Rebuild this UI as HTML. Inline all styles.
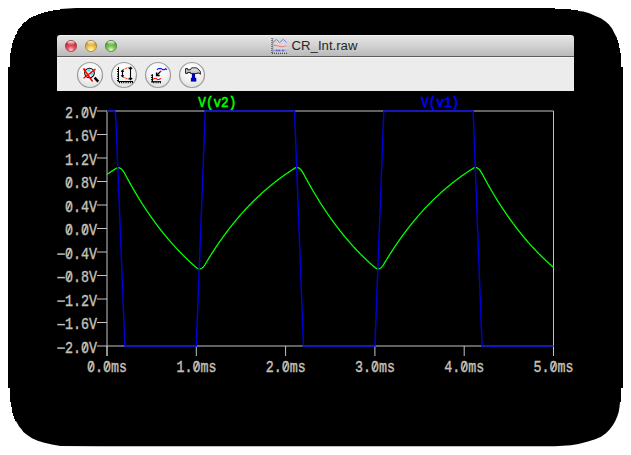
<!DOCTYPE html>
<html><head><meta charset="utf-8">
<style>
html,body{margin:0;padding:0;background:#fff;}
body{width:631px;height:455px;position:relative;overflow:hidden;}
svg{position:absolute;left:0;top:0;}
</style></head><body>
<svg width="631" height="455" viewBox="0 0 631 455">
<defs>
<radialGradient id="bg" cx="50%" cy="30%" r="75%">
<stop offset="0" stop-color="#ffffff"/><stop offset="0.5" stop-color="#f6f6f6"/><stop offset="1" stop-color="#dcdcdc"/>
</radialGradient>
<linearGradient id="tb" x1="0" y1="0" x2="0" y2="1">
<stop offset="0" stop-color="#e6e6e6"/><stop offset="0.5" stop-color="#d2d2d2"/><stop offset="1" stop-color="#b9b9b9"/>
</linearGradient>
<radialGradient id="rl" cx="50%" cy="85%" r="70%"><stop offset="0" stop-color="#fcd0d4"/><stop offset="0.45" stop-color="#ec5262"/><stop offset="1" stop-color="#b82434"/></radialGradient>
<radialGradient id="yl" cx="50%" cy="85%" r="70%"><stop offset="0" stop-color="#fff8c0"/><stop offset="0.45" stop-color="#f4cc58"/><stop offset="1" stop-color="#c8962a"/></radialGradient>
<radialGradient id="gl" cx="50%" cy="85%" r="70%"><stop offset="0" stop-color="#e0f8c8"/><stop offset="0.45" stop-color="#84cc5a"/><stop offset="1" stop-color="#4a9a30"/></radialGradient>
<linearGradient id="hl" x1="0" y1="0" x2="0" y2="1"><stop offset="0" stop-color="#fff" stop-opacity="0.95"/><stop offset="1" stop-color="#fff" stop-opacity="0.1"/></linearGradient>
<linearGradient id="hh" x1="0" y1="0" x2="0" y2="1"><stop offset="0" stop-color="#fafafa"/><stop offset="0.5" stop-color="#c8c8c8"/><stop offset="1" stop-color="#f4f4f4"/></linearGradient>
</defs>
<polygon points="76,8 555,8 555,9 571,9 571,10 578,10 578,11 583.2,11.6 589.3,13.3 595.5,16 600.8,18.2 605.2,21.3 608.7,24.3 612.2,28.7 614.8,34 617,38 617,40 618,40 618,43 619,43 619,48 620,48 620,53 621,53 621,67 623,67 623,388 621,388 621,402 620,402 619.5,407.1 618.7,411.9 617.2,416.6 615.4,420.8 613,425 609.4,429.7 605.9,433.3 601.1,436.8 595.2,439.2 588,441.6 578.5,444 570.8,445.2 555,446.3 100,446.2 60.5,445.9 51.9,444.5 43.4,442.6 37.7,440.7 32,438.3 27.2,435 23.4,432.1 21.5,429.3 19.1,426.4 17.7,424 16.3,421.5 15,421 15,419 14,419 14,416 13,416 13,413 12,413 12,407 11,407 11,402 10,402 10,388 8,388 8,67 10,67 10,53 11,53 11,48 12,48 12,43 13,43 13,42 13,41 13,40 14,40 14,39 14,38 15,38 15,37 15,36 15,35 16,35 16,34 17,34 17,33 17,32 17,31 18,31 18,30 18,29 19,29 19,28 20,28 20,27 21,27 21,26 22,26 22,25 22,24 23,24 23,23 24,23 24,22 26,22 26,21 27,21 27,20 28,20 28,19 29,19 29,18 31,18 31,17 33,17 33,16 36,16 36,15 38,15 38,14 41,14 41,13 44,13 44,12 48,12 48,11 53,11 53,10 60,10 60,9" fill="#000"/>
<path d="M57,56 V38 q0,-3 3,-3 H571 q3,0 3,3 V56 z" fill="url(#tb)"/>
<line x1="60" y1="35.5" x2="571" y2="35.5" stroke="#f2f2f2" stroke-width="1"/>
<rect x="57" y="56" width="517" height="35" fill="#ececec"/>
<rect x="57" y="56" width="517" height="1" fill="#5c5c5c"/>
<rect x="57" y="57" width="517" height="1" fill="#f6f6f6"/>
<circle cx="71" cy="46" r="5.6" fill="url(#rl)" stroke="#9a3a44" stroke-width="0.7"/>
<circle cx="91" cy="46" r="5.6" fill="url(#yl)" stroke="#9a7a30" stroke-width="0.7"/>
<circle cx="111" cy="46" r="5.6" fill="url(#gl)" stroke="#4a7a3a" stroke-width="0.7"/>
<ellipse cx="71" cy="42.9" rx="3.6" ry="1.9" fill="url(#hl)"/>
<ellipse cx="91" cy="42.9" rx="3.6" ry="1.9" fill="url(#hl)"/>
<ellipse cx="111" cy="42.9" rx="3.6" ry="1.9" fill="url(#hl)"/>
<circle cx="90" cy="75" r="12.5" fill="url(#bg)" stroke="#9c9c9c" stroke-width="1.2"/><circle cx="124" cy="75" r="12.5" fill="url(#bg)" stroke="#9c9c9c" stroke-width="1.2"/><circle cx="158" cy="75" r="12.5" fill="url(#bg)" stroke="#9c9c9c" stroke-width="1.2"/><circle cx="192" cy="75" r="12.5" fill="url(#bg)" stroke="#9c9c9c" stroke-width="1.2"/>
<text x="291.6" y="50.1" font-family="'Liberation Sans', sans-serif" font-size="13.3" fill="#262626" textLength="65.8" lengthAdjust="spacingAndGlyphs">CR_Int.raw</text>

<!-- icon1 magnifier -->
<g>
<line x1="94.6" y1="77.6" x2="98.2" y2="81.6" stroke="#000" stroke-width="2.4"/>
<circle cx="89.5" cy="73" r="4.8" fill="#f2f2f2" stroke="#000" stroke-width="1.1"/>
<path d="M87.5,70.5 h3 M90.8,75 l2,-1.8" stroke="#30e0ee" stroke-width="1.8"/>
<line x1="83.6" y1="68.8" x2="92.6" y2="81.5" stroke="#f00" stroke-width="1.5"/>
<line x1="95.5" y1="69.1" x2="83.5" y2="78.3" stroke="#f00" stroke-width="1.4"/>
<circle cx="84.2" cy="69.2" r="1" fill="#f00"/>
</g>
<!-- icon2 -->
<g fill="none" stroke="#000">
<line x1="118.5" y1="67" x2="118.5" y2="81.5" stroke-width="1"/>
<line x1="118" y1="81.5" x2="133" y2="81.5" stroke-width="1"/>
<path d="M117,69.5h1M117,71.5h1M117,74h1M117,76.2h1M117,78.5h1M117,80.6h1" stroke-width="1.1"/>
<path d="M119.5,82v1.2M121.6,82v1.2M123.8,82v1.2M126,82v1.2M128.2,82v1.2M130.4,82v1.2M132.5,82v1.2" stroke-width="1.1"/>
<path d="M122.5,70.3 v6.4 M121.2,71.6 l1.3,-1.3 l1.3,1.3 M121.2,75.4 l1.3,1.3 l1.3,-1.3" stroke-width="1.1"/>
<path d="M130.5,67.2 v12.6 M128.8,69 l1.7,-1.8 l1.7,1.8 M128.8,78 l1.7,1.8 l1.7,-1.8" stroke-width="1.1"/>
<path d="M123,69.7 L128.7,67.3 M123,77 L128.7,79.4" stroke="#ff3010" stroke-width="1" stroke-dasharray="1.8,0.7"/>
</g>
<!-- icon3 -->
<g fill="none">
<path d="M156.9,69.8 L158.3,68.6 H161.3 L162.6,69.6 H164.6 L165.7,68.6 L166.9,69.8" stroke="#1818ff" stroke-width="1.1"/>
<path d="M160.6,71.4 L157,75" stroke="#000" stroke-width="1.3"/>
<path d="M156.6,72.4 V75.5 H159.7" stroke="#000" stroke-width="1.5"/>
<circle cx="160.8" cy="71.2" r="0.8" fill="#e00"/>
<line x1="152.4" y1="74.2" x2="152.4" y2="82.2" stroke="#000" stroke-width="1.1"/>
<line x1="152" y1="81.7" x2="161" y2="81.7" stroke="#000" stroke-width="1.1"/>
<path d="M151,75.3h1.4M151,77.5h1.4M151,79.7h1.4M151,81.9h1.4" stroke="#000" stroke-width="1"/>
<path d="M153.8,81.7v1.6M156,81.7v1.6M158.2,81.7v1.6M160.4,81.7v1.6" stroke="#000" stroke-width="1"/>
<path d="M153.1,79.4 L154.1,78.5 H156.3 L157.2,79.5 H159.3 L160.3,78.5 L161,78.6" stroke="#ff1010" stroke-width="1.1"/>
</g>
<!-- icon4 hammer -->
<g>
<rect x="191.9" y="73.6" width="3.2" height="4.4" fill="#0000b8"/>
<rect x="190.9" y="77.8" width="5.4" height="3.8" fill="#0000b8"/>
<path d="M185.6,68.6 H187.6 V69.8 H190.4 L191.6,67.9 H196.2 L198,69 L200.3,71.5 V74.4 L199.4,73.2 L197.6,72.8 V73.4 H190.4 V72.4 H187.6 V73.4 H185.6 Z" fill="url(#hh)" stroke="#000" stroke-width="0.9" stroke-linejoin="round"/>
</g>
<!-- title icon -->
<g>
<rect x="272" y="38" width="15" height="15" fill="#d8d8d8" opacity="0.8"/>
<line x1="272" y1="38" x2="272" y2="53.5" stroke="#222" stroke-width="1" stroke-dasharray="1,1"/>
<line x1="272.8" y1="38" x2="272.8" y2="53" stroke="#777" stroke-width="0.6"/>
<line x1="272" y1="53.2" x2="287" y2="53.2" stroke="#222" stroke-width="1" stroke-dasharray="1,1"/>
<polyline points="273,42.4 276.4,39.4 279.6,42.5 283.3,39.3 286.5,42.6" fill="none" stroke="#7c7cf0" stroke-width="1"/>
<path d="M273,46 q2,-1.5 4,-0.3 q3,1.2 6,1 q2,-0.2 3.5,-1.2" fill="none" stroke="#f07a7a" stroke-width="1"/>
<line x1="273" y1="50.5" x2="286.5" y2="50.5" stroke="#a0a0e0" stroke-width="2"/>
<path d="M276,50.5h1.5M278.5,50.5h1.5M282,50.5h1.5" stroke="#5a5ad8" stroke-width="1.4"/>
</g>

<rect x="57" y="91" width="517" height="320" fill="#000"/>
<g stroke="#c4c4c4" stroke-width="1" fill="none">
<line x1="107" y1="111" x2="553.5" y2="111"/>
<line x1="107" y1="111" x2="107" y2="356"/>
<line x1="553.5" y1="111" x2="553.5" y2="356"/>
<line x1="107" y1="346" x2="553.5" y2="346"/>
<line x1="97" y1="111.00" x2="107" y2="111.00"/><line x1="97" y1="134.50" x2="107" y2="134.50"/><line x1="97" y1="158.00" x2="107" y2="158.00"/><line x1="97" y1="181.50" x2="107" y2="181.50"/><line x1="97" y1="205.00" x2="107" y2="205.00"/><line x1="97" y1="228.50" x2="107" y2="228.50"/><line x1="97" y1="252.00" x2="107" y2="252.00"/><line x1="97" y1="275.50" x2="107" y2="275.50"/><line x1="97" y1="299.00" x2="107" y2="299.00"/><line x1="97" y1="322.50" x2="107" y2="322.50"/><line x1="97" y1="346.00" x2="107" y2="346.00"/><line x1="107.00" y1="346" x2="107.00" y2="356"/><line x1="196.30" y1="346" x2="196.30" y2="356"/><line x1="285.60" y1="346" x2="285.60" y2="356"/><line x1="374.90" y1="346" x2="374.90" y2="356"/><line x1="464.20" y1="346" x2="464.20" y2="356"/><line x1="553.50" y1="346" x2="553.50" y2="356"/>
</g>
<g font-family="'Liberation Mono', monospace" font-size="16" fill="#c4c0b8" stroke="#c4c0b8" stroke-width="0.4">
<text x="65" y="117.50" textLength="32" lengthAdjust="spacingAndGlyphs">2.0V</text><text x="65" y="141.00" textLength="32" lengthAdjust="spacingAndGlyphs">1.6V</text><text x="65" y="164.50" textLength="32" lengthAdjust="spacingAndGlyphs">1.2V</text><text x="65" y="188.00" textLength="32" lengthAdjust="spacingAndGlyphs">0.8V</text><text x="65" y="211.50" textLength="32" lengthAdjust="spacingAndGlyphs">0.4V</text><text x="65" y="235.00" textLength="32" lengthAdjust="spacingAndGlyphs">0.0V</text><text x="65" y="258.50" textLength="32" lengthAdjust="spacingAndGlyphs">0.4V</text><text x="65" y="282.00" textLength="32" lengthAdjust="spacingAndGlyphs">0.8V</text><text x="65" y="305.50" textLength="32" lengthAdjust="spacingAndGlyphs">1.2V</text><text x="65" y="329.00" textLength="32" lengthAdjust="spacingAndGlyphs">1.6V</text><text x="65" y="352.50" textLength="32" lengthAdjust="spacingAndGlyphs">2.0V</text><text x="87.10" y="371.8" textLength="40" lengthAdjust="spacingAndGlyphs">0.0ms</text><text x="176.40" y="371.8" textLength="40" lengthAdjust="spacingAndGlyphs">1.0ms</text><text x="265.70" y="371.8" textLength="40" lengthAdjust="spacingAndGlyphs">2.0ms</text><text x="355.00" y="371.8" textLength="40" lengthAdjust="spacingAndGlyphs">3.0ms</text><text x="444.30" y="371.8" textLength="40" lengthAdjust="spacingAndGlyphs">4.0ms</text><text x="533.60" y="371.8" textLength="40" lengthAdjust="spacingAndGlyphs">5.0ms</text>
</g>
<g stroke="#c4c0b8" stroke-width="1.6"><rect x="83.80" y="110.00" width="2.4" height="4" fill="#000" stroke="none"/><line x1="83.50" y1="115.30" x2="86.50" y2="108.70"/><rect x="67.80" y="180.50" width="2.4" height="4" fill="#000" stroke="none"/><line x1="67.50" y1="185.80" x2="70.50" y2="179.20"/><rect x="67.80" y="204.00" width="2.4" height="4" fill="#000" stroke="none"/><line x1="67.50" y1="209.30" x2="70.50" y2="202.70"/><rect x="67.80" y="227.50" width="2.4" height="4" fill="#000" stroke="none"/><line x1="67.50" y1="232.80" x2="70.50" y2="226.20"/><rect x="83.80" y="227.50" width="2.4" height="4" fill="#000" stroke="none"/><line x1="83.50" y1="232.80" x2="86.50" y2="226.20"/><rect x="67.80" y="251.00" width="2.4" height="4" fill="#000" stroke="none"/><line x1="67.50" y1="256.30" x2="70.50" y2="249.70"/><rect x="67.80" y="274.50" width="2.4" height="4" fill="#000" stroke="none"/><line x1="67.50" y1="279.80" x2="70.50" y2="273.20"/><rect x="83.80" y="345.00" width="2.4" height="4" fill="#000" stroke="none"/><line x1="83.50" y1="350.30" x2="86.50" y2="343.70"/><rect x="89.90" y="364.30" width="2.4" height="4" fill="#000" stroke="none"/><line x1="89.60" y1="369.60" x2="92.60" y2="363.00"/><rect x="105.90" y="364.30" width="2.4" height="4" fill="#000" stroke="none"/><line x1="105.60" y1="369.60" x2="108.60" y2="363.00"/><rect x="195.20" y="364.30" width="2.4" height="4" fill="#000" stroke="none"/><line x1="194.90" y1="369.60" x2="197.90" y2="363.00"/><rect x="284.50" y="364.30" width="2.4" height="4" fill="#000" stroke="none"/><line x1="284.20" y1="369.60" x2="287.20" y2="363.00"/><rect x="373.80" y="364.30" width="2.4" height="4" fill="#000" stroke="none"/><line x1="373.50" y1="369.60" x2="376.50" y2="363.00"/><rect x="463.10" y="364.30" width="2.4" height="4" fill="#000" stroke="none"/><line x1="462.80" y1="369.60" x2="465.80" y2="363.00"/><rect x="552.40" y="364.30" width="2.4" height="4" fill="#000" stroke="none"/><line x1="552.10" y1="369.60" x2="555.10" y2="363.00"/></g>
<g stroke="#c4c0b8" stroke-width="1.5"><line x1="57.3" y1="254.10" x2="64.9" y2="254.10"/><line x1="57.3" y1="277.60" x2="64.9" y2="277.60"/><line x1="57.3" y1="301.10" x2="64.9" y2="301.10"/><line x1="57.3" y1="324.60" x2="64.9" y2="324.60"/><line x1="57.3" y1="348.10" x2="64.9" y2="348.10"/></g>
<g font-family="'Liberation Mono', monospace" font-size="15" stroke-width="0.65">
<text x="198.3" y="106.8" textLength="38" lengthAdjust="spacingAndGlyphs" fill="#00ff00" stroke="#00ff00">V(v2)</text>
<text x="421.1" y="106.8" textLength="38" lengthAdjust="spacingAndGlyphs" fill="#0000ff" stroke="#0000ff">V(v1)</text>
</g>
<polyline points="107.00,174.45 107.45,174.14 107.89,173.83 108.34,173.52 108.79,173.22 109.23,172.91 109.68,172.61 110.13,172.30 110.57,172.00 111.02,171.70 111.47,171.41 111.91,171.11 112.36,170.82 112.80,170.52 113.25,170.23 113.70,169.94 114.14,169.65 114.59,169.36 115.04,169.08 115.48,168.79 115.93,168.51 116.38,168.23 116.82,168.01 117.27,167.84 117.72,167.74 118.16,167.69 118.61,167.70 119.06,167.77 119.50,167.89 119.95,168.07 120.39,168.31 120.84,168.61 121.29,168.96 121.73,169.36 122.18,169.83 122.63,170.35 123.07,170.92 123.52,171.55 123.97,172.23 124.41,172.97 124.86,173.76 125.31,174.60 125.75,175.44 126.20,176.28 126.65,177.11 127.09,177.94 127.54,178.76 127.99,179.58 128.43,180.40 128.88,181.21 129.32,182.02 129.77,182.82 130.22,183.62 130.66,184.42 131.11,185.21 131.56,186.00 132.00,186.78 132.45,187.56 132.90,188.34 133.34,189.11 133.79,189.88 134.24,190.64 134.68,191.41 135.13,192.16 135.58,192.92 136.02,193.67 136.47,194.41 136.92,195.16 137.36,195.90 137.81,196.63 138.25,197.37 138.70,198.09 139.15,198.82 139.59,199.54 140.04,200.26 140.49,200.97 140.93,201.68 141.38,202.39 141.83,203.09 142.27,203.80 142.72,204.49 143.17,205.19 143.61,205.88 144.06,206.56 144.51,207.25 144.95,207.93 145.40,208.60 145.85,209.28 146.29,209.95 146.74,210.61 147.19,211.28 147.63,211.94 148.08,212.60 148.52,213.25 148.97,213.90 149.42,214.55 149.86,215.19 150.31,215.83 150.76,216.47 151.20,217.11 151.65,217.74 152.10,218.37 152.54,218.99 152.99,219.62 153.44,220.23 153.88,220.85 154.33,221.46 154.78,222.08 155.22,222.68 155.67,223.29 156.12,223.89 156.56,224.49 157.01,225.08 157.45,225.68 157.90,226.27 158.35,226.85 158.79,227.44 159.24,228.02 159.69,228.60 160.13,229.17 160.58,229.74 161.03,230.31 161.47,230.88 161.92,231.45 162.37,232.01 162.81,232.57 163.26,233.12 163.71,233.68 164.15,234.23 164.60,234.77 165.05,235.32 165.49,235.86 165.94,236.40 166.38,236.94 166.83,237.47 167.28,238.01 167.72,238.53 168.17,239.06 168.62,239.59 169.06,240.11 169.51,240.63 169.96,241.14 170.40,241.66 170.85,242.17 171.30,242.68 171.74,243.18 172.19,243.69 172.64,244.19 173.08,244.69 173.53,245.19 173.97,245.68 174.42,246.17 174.87,246.66 175.31,247.15 175.76,247.63 176.21,248.11 176.65,248.59 177.10,249.07 177.55,249.55 177.99,250.02 178.44,250.49 178.89,250.96 179.33,251.42 179.78,251.89 180.23,252.35 180.67,252.81 181.12,253.26 181.57,253.72 182.01,254.17 182.46,254.62 182.91,255.07 183.35,255.52 183.80,255.96 184.24,256.40 184.69,256.84 185.14,257.28 185.58,257.71 186.03,258.14 186.48,258.58 186.92,259.00 187.37,259.43 187.82,259.85 188.26,260.28 188.71,260.70 189.16,261.12 189.60,261.53 190.05,261.95 190.50,262.36 190.94,262.77 191.39,263.18 191.84,263.58 192.28,263.99 192.73,264.39 193.17,264.79 193.62,265.19 194.07,265.58 194.51,265.98 194.96,266.37 195.41,266.76 195.85,267.15 196.30,267.53 196.75,267.92 197.19,268.24 197.64,268.51 198.09,268.72 198.53,268.86 198.98,268.95 199.43,268.99 199.87,268.96 200.32,268.88 200.77,268.74 201.21,268.54 201.66,268.29 202.10,267.98 202.55,267.61 203.00,267.19 203.44,266.71 203.89,266.18 204.34,265.59 204.78,264.95 205.23,264.25 205.68,263.50 206.12,262.75 206.57,262.01 207.02,261.27 207.46,260.53 207.91,259.80 208.36,259.07 208.80,258.34 209.25,257.62 209.69,256.90 210.14,256.19 210.59,255.47 211.03,254.77 211.48,254.06 211.93,253.36 212.37,252.66 212.82,251.97 213.27,251.28 213.71,250.59 214.16,249.91 214.61,249.22 215.05,248.55 215.50,247.87 215.95,247.20 216.39,246.53 216.84,245.87 217.29,245.21 217.73,244.55 218.18,243.90 218.62,243.24 219.07,242.60 219.52,241.95 219.96,241.31 220.41,240.67 220.86,240.03 221.30,239.40 221.75,238.77 222.20,238.15 222.64,237.52 223.09,236.90 223.54,236.29 223.98,235.67 224.43,235.06 224.88,234.45 225.32,233.85 225.77,233.24 226.22,232.65 226.66,232.05 227.11,231.46 227.56,230.87 228.00,230.28 228.45,229.69 228.89,229.11 229.34,228.53 229.79,227.96 230.23,227.38 230.68,226.81 231.13,226.24 231.57,225.68 232.02,225.12 232.47,224.56 232.91,224.00 233.36,223.45 233.81,222.90 234.25,222.35 234.70,221.80 235.15,221.26 235.59,220.72 236.04,220.18 236.48,219.65 236.93,219.11 237.38,218.58 237.82,218.06 238.27,217.53 238.72,217.01 239.16,216.49 239.61,215.97 240.06,215.46 240.50,214.95 240.95,214.44 241.40,213.93 241.84,213.42 242.29,212.92 242.74,212.42 243.18,211.93 243.63,211.43 244.08,210.94 244.52,210.45 244.97,209.96 245.42,209.48 245.86,208.99 246.31,208.51 246.75,208.03 247.20,207.56 247.65,207.09 248.09,206.61 248.54,206.15 248.99,205.68 249.43,205.22 249.88,204.75 250.33,204.29 250.77,203.84 251.22,203.38 251.67,202.93 252.11,202.48 252.56,202.03 253.01,201.58 253.45,201.14 253.90,200.70 254.34,200.26 254.79,199.82 255.24,199.38 255.68,198.95 256.13,198.52 256.58,198.09 257.02,197.66 257.47,197.24 257.92,196.82 258.36,196.40 258.81,195.98 259.26,195.56 259.70,195.15 260.15,194.73 260.60,194.32 261.04,193.92 261.49,193.51 261.94,193.10 262.38,192.70 262.83,192.30 263.27,191.90 263.72,191.51 264.17,191.11 264.61,190.72 265.06,190.33 265.51,189.94 265.95,189.55 266.40,189.17 266.85,188.78 267.29,188.40 267.74,188.02 268.19,187.65 268.63,187.27 269.08,186.90 269.53,186.52 269.97,186.15 270.42,185.79 270.87,185.42 271.31,185.05 271.76,184.69 272.21,184.33 272.65,183.97 273.10,183.61 273.54,183.26 273.99,182.90 274.44,182.55 274.88,182.20 275.33,181.85 275.78,181.50 276.22,181.16 276.67,180.81 277.12,180.47 277.56,180.13 278.01,179.79 278.46,179.45 278.90,179.12 279.35,178.79 279.80,178.45 280.24,178.12 280.69,177.79 281.13,177.47 281.58,177.14 282.03,176.82 282.47,176.49 282.92,176.17 283.37,175.85 283.81,175.53 284.26,175.22 284.71,174.90 285.15,174.59 285.60,174.28 286.05,173.97 286.49,173.66 286.94,173.35 287.39,173.05 287.83,172.74 288.28,172.44 288.73,172.14 289.17,171.84 289.62,171.54 290.06,171.24 290.51,170.95 290.96,170.66 291.40,170.36 291.85,170.07 292.30,169.78 292.74,169.49 293.19,169.21 293.64,168.92 294.08,168.64 294.53,168.36 294.98,168.07 295.42,167.85 295.87,167.69 296.32,167.58 296.76,167.54 297.21,167.55 297.66,167.62 298.10,167.74 298.55,167.92 299.00,168.16 299.44,168.46 299.89,168.81 300.33,169.22 300.78,169.68 301.23,170.20 301.67,170.77 302.12,171.40 302.57,172.09 303.01,172.82 303.46,173.62 303.91,174.46 304.35,175.30 304.80,176.14 305.25,176.97 305.69,177.80 306.14,178.62 306.59,179.44 307.03,180.26 307.48,181.07 307.93,181.88 308.37,182.69 308.82,183.49 309.26,184.28 309.71,185.08 310.16,185.86 310.60,186.65 311.05,187.43 311.50,188.21 311.94,188.98 312.39,189.75 312.84,190.52 313.28,191.28 313.73,192.04 314.18,192.79 314.62,193.54 315.07,194.29 315.52,195.03 315.96,195.77 316.41,196.51 316.86,197.24 317.30,197.97 317.75,198.70 318.19,199.42 318.64,200.14 319.09,200.85 319.53,201.57 319.98,202.27 320.43,202.98 320.87,203.68 321.32,204.38 321.77,205.07 322.21,205.76 322.66,206.45 323.11,207.13 323.55,207.81 324.00,208.49 324.45,209.17 324.89,209.84 325.34,210.50 325.79,211.17 326.23,211.83 326.68,212.49 327.12,213.14 327.57,213.79 328.02,214.44 328.46,215.09 328.91,215.73 329.36,216.37 329.80,217.00 330.25,217.63 330.70,218.26 331.14,218.89 331.59,219.51 332.04,220.13 332.48,220.75 332.93,221.36 333.38,221.97 333.82,222.58 334.27,223.19 334.72,223.79 335.16,224.39 335.61,224.98 336.05,225.58 336.50,226.17 336.95,226.76 337.39,227.34 337.84,227.92 338.29,228.50 338.73,229.08 339.18,229.65 339.63,230.22 340.07,230.79 340.52,231.35 340.97,231.91 341.41,232.47 341.86,233.03 342.31,233.58 342.75,234.13 343.20,234.68 343.64,235.23 344.09,235.77 344.54,236.31 344.98,236.85 345.43,237.38 345.88,237.92 346.32,238.45 346.77,238.97 347.22,239.50 347.66,240.02 348.11,240.54 348.56,241.06 349.00,241.57 349.45,242.08 349.90,242.59 350.34,243.10 350.79,243.60 351.24,244.11 351.68,244.61 352.13,245.10 352.57,245.60 353.02,246.09 353.47,246.58 353.91,247.07 354.36,247.55 354.81,248.03 355.25,248.51 355.70,248.99 356.15,249.47 356.59,249.94 357.04,250.41 357.49,250.88 357.93,251.35 358.38,251.81 358.83,252.27 359.27,252.73 359.72,253.19 360.17,253.64 360.61,254.10 361.06,254.55 361.50,255.00 361.95,255.44 362.40,255.89 362.84,256.33 363.29,256.77 363.74,257.20 364.18,257.64 364.63,258.07 365.08,258.50 365.52,258.93 365.97,259.36 366.42,259.78 366.86,260.21 367.31,260.63 367.76,261.05 368.20,261.46 368.65,261.88 369.10,262.29 369.54,262.70 369.99,263.11 370.44,263.51 370.88,263.92 371.33,264.32 371.77,264.72 372.22,265.12 372.67,265.52 373.11,265.91 373.56,266.30 374.01,266.69 374.45,267.08 374.90,267.47 375.35,267.85 375.79,268.18 376.24,268.45 376.69,268.65 377.13,268.80 377.58,268.89 378.03,268.93 378.47,268.90 378.92,268.82 379.37,268.68 379.81,268.48 380.26,268.23 380.70,267.92 381.15,267.55 381.60,267.13 382.04,266.65 382.49,266.12 382.94,265.53 383.38,264.89 383.83,264.19 384.28,263.44 384.72,262.69 385.17,261.95 385.62,261.21 386.06,260.47 386.51,259.74 386.96,259.01 387.40,258.29 387.85,257.56 388.29,256.85 388.74,256.13 389.19,255.42 389.63,254.71 390.08,254.01 390.53,253.31 390.97,252.61 391.42,251.91 391.87,251.22 392.31,250.54 392.76,249.85 393.21,249.17 393.65,248.49 394.10,247.82 394.55,247.15 394.99,246.48 395.44,245.82 395.89,245.16 396.33,244.50 396.78,243.85 397.23,243.19 397.67,242.55 398.12,241.90 398.56,241.26 399.01,240.62 399.46,239.99 399.90,239.35 400.35,238.72 400.80,238.10 401.24,237.48 401.69,236.86 402.14,236.24 402.58,235.62 403.03,235.01 403.48,234.41 403.92,233.80 404.37,233.20 404.82,232.60 405.26,232.00 405.71,231.41 406.16,230.82 406.60,230.23 407.05,229.65 407.49,229.07 407.94,228.49 408.39,227.91 408.83,227.34 409.28,226.77 409.73,226.20 410.17,225.64 410.62,225.07 411.07,224.52 411.51,223.96 411.96,223.41 412.41,222.85 412.85,222.31 413.30,221.76 413.75,221.22 414.19,220.68 414.64,220.14 415.09,219.60 415.53,219.07 415.98,218.54 416.42,218.01 416.87,217.49 417.32,216.97 417.76,216.45 418.21,215.93 418.66,215.42 419.10,214.91 419.55,214.40 420.00,213.89 420.44,213.39 420.89,212.88 421.34,212.38 421.78,211.89 422.23,211.39 422.68,210.90 423.12,210.41 423.57,209.92 424.01,209.44 424.46,208.96 424.91,208.48 425.35,208.00 425.80,207.52 426.25,207.05 426.69,206.58 427.14,206.11 427.59,205.64 428.03,205.18 428.48,204.72 428.93,204.26 429.37,203.80 429.82,203.35 430.27,202.89 430.71,202.44 431.16,202.00 431.61,201.55 432.05,201.11 432.50,200.66 432.94,200.22 433.39,199.79 433.84,199.35 434.28,198.92 434.73,198.49 435.18,198.06 435.62,197.63 436.07,197.21 436.52,196.78 436.96,196.36 437.41,195.95 437.86,195.53 438.30,195.11 438.75,194.70 439.20,194.29 439.64,193.88 440.09,193.48 440.54,193.07 440.98,192.67 441.43,192.27 441.88,191.87 442.32,191.48 442.77,191.08 443.21,190.69 443.66,190.30 444.11,189.91 444.55,189.52 445.00,189.14 445.45,188.75 445.89,188.37 446.34,187.99 446.79,187.62 447.23,187.24 447.68,186.87 448.13,186.50 448.57,186.13 449.02,185.76 449.47,185.39 449.91,185.03 450.36,184.66 450.81,184.30 451.25,183.94 451.70,183.59 452.14,183.23 452.59,182.88 453.04,182.52 453.48,182.17 453.93,181.82 454.38,181.48 454.82,181.13 455.27,180.79 455.72,180.45 456.16,180.10 456.61,179.77 457.06,179.43 457.50,179.09 457.95,178.76 458.40,178.43 458.84,178.10 459.29,177.77 459.74,177.44 460.18,177.11 460.63,176.79 461.07,176.47 461.52,176.15 461.97,175.83 462.41,175.51 462.86,175.19 463.31,174.88 463.75,174.57 464.20,174.25 464.65,173.94 465.09,173.64 465.54,173.33 465.99,173.02 466.43,172.72 466.88,172.42 467.33,172.12 467.77,171.82 468.22,171.52 468.66,171.22 469.11,170.93 469.56,170.63 470.00,170.34 470.45,170.05 470.90,169.76 471.34,169.47 471.79,169.19 472.24,168.90 472.68,168.62 473.13,168.33 473.58,168.05 474.02,167.83 474.47,167.67 474.92,167.56 475.36,167.52 475.81,167.53 476.26,167.59 476.70,167.72 477.15,167.90 477.60,168.14 478.04,168.44 478.49,168.79 478.93,169.20 479.38,169.66 479.83,170.18 480.27,170.75 480.72,171.38 481.17,172.07 481.61,172.80 482.06,173.60 482.51,174.44 482.95,175.28 483.40,176.12 483.85,176.95 484.29,177.78 484.74,178.60 485.19,179.42 485.63,180.24 486.08,181.05 486.52,181.86 486.97,182.67 487.42,183.47 487.86,184.26 488.31,185.06 488.76,185.85 489.20,186.63 489.65,187.41 490.10,188.19 490.54,188.96 490.99,189.73 491.44,190.50 491.88,191.26 492.33,192.02 492.78,192.77 493.22,193.53 493.67,194.27 494.12,195.02 494.56,195.76 495.01,196.49 495.46,197.23 495.90,197.96 496.35,198.68 496.79,199.40 497.24,200.12 497.69,200.84 498.13,201.55 498.58,202.26 499.03,202.96 499.47,203.66 499.92,204.36 500.37,205.05 500.81,205.75 501.26,206.43 501.71,207.12 502.15,207.80 502.60,208.48 503.05,209.15 503.49,209.82 503.94,210.49 504.39,211.15 504.83,211.81 505.28,212.47 505.72,213.13 506.17,213.78 506.62,214.43 507.06,215.07 507.51,215.71 507.96,216.35 508.40,216.99 508.85,217.62 509.30,218.25 509.74,218.87 510.19,219.50 510.64,220.12 511.08,220.73 511.53,221.35 511.98,221.96 512.42,222.57 512.87,223.17 513.31,223.78 513.76,224.37 514.21,224.97 514.65,225.56 515.10,226.15 515.55,226.74 515.99,227.33 516.44,227.91 516.89,228.49 517.33,229.06 517.78,229.64 518.23,230.21 518.67,230.77 519.12,231.34 519.57,231.90 520.01,232.46 520.46,233.02 520.91,233.57 521.35,234.12 521.80,234.67 522.25,235.22 522.69,235.76 523.14,236.30 523.58,236.84 524.03,237.37 524.48,237.90 524.92,238.43 525.37,238.96 525.82,239.49 526.26,240.01 526.71,240.53 527.16,241.05 527.60,241.56 528.05,242.07 528.50,242.58 528.94,243.09 529.39,243.59 529.84,244.09 530.28,244.59 530.73,245.09 531.17,245.59 531.62,246.08 532.07,246.57 532.51,247.06 532.96,247.54 533.41,248.02 533.85,248.50 534.30,248.98 534.75,249.46 535.19,249.93 535.64,250.40 536.09,250.87 536.53,251.34 536.98,251.80 537.43,252.26 537.87,252.72 538.32,253.18 538.77,253.63 539.21,254.09 539.66,254.54 540.11,254.99 540.55,255.43 541.00,255.88 541.44,256.32 541.89,256.76 542.34,257.19 542.78,257.63 543.23,258.06 543.68,258.49 544.12,258.92 544.57,259.35 545.02,259.77 545.46,260.20 545.91,260.62 546.36,261.04 546.80,261.45 547.25,261.87 547.70,262.28 548.14,262.69 548.59,263.10 549.04,263.50 549.48,263.91 549.93,264.31 550.37,264.71 550.82,265.11 551.27,265.51 551.71,265.90 552.16,266.29 552.61,266.68 553.05,267.07 553.50,267.46" fill="none" stroke="#00ff00" stroke-width="1.3"/>
<polyline points="107.00,111.00 114.59,111.00 115.66,113.94 124.86,346.00 196.30,346.00 205.23,111.00 294.53,111.00 303.46,346.00 374.90,346.00 383.83,111.00 473.13,111.00 482.06,346.00 553.50,346.00 553.50,346.00" fill="none" stroke="#0000d8" stroke-width="1.45"/>
</svg>

</body></html>
